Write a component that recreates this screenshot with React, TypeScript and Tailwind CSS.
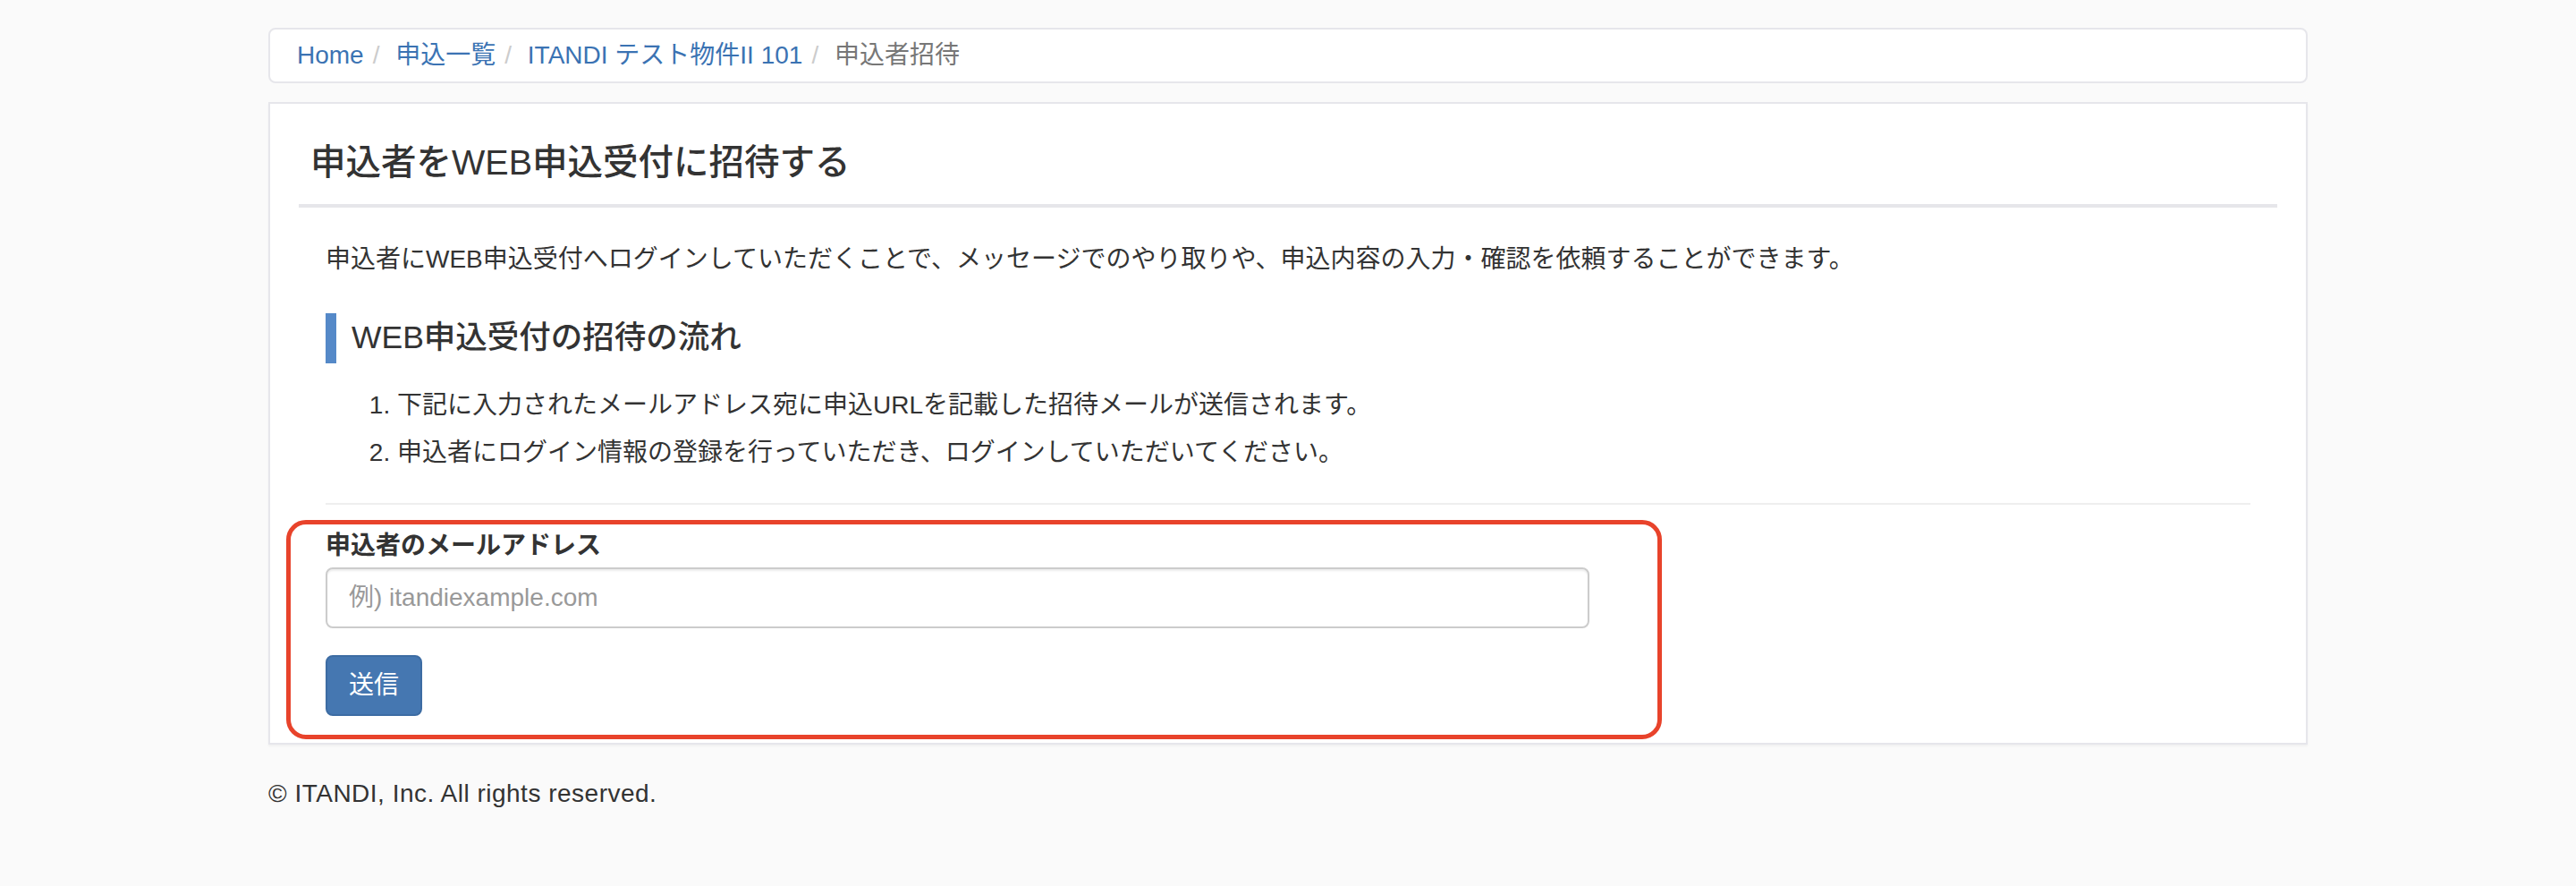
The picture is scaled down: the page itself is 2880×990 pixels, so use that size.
import React, { useState } from "react";

const crumbs = [
  { label: "Home", href: "#" },
  { label: "申込一覧", href: "#" },
  { label: "ITANDI テスト物件II 101", href: "#" },
];

const steps = [
  "下記に入力されたメールアドレス宛に申込URLを記載した招待メールが送信されます。",
  "申込者にログイン情報の登録を行っていただき、ログインしていただいてください。",
];

const App: React.FC = () => {
  const [email, setEmail] = useState("");

  return (
    <div className="min-h-screen bg-[#fafafa] text-[#333] font-['Liberation_Sans','Noto_Sans_CJK_JP',sans-serif]">
      <div className="w-[2280px] mx-auto pt-[31px]">
        {/* breadcrumb */}
        <ol className="flex items-center h-[62px] px-[30px] bg-white border-2 border-[#e6e6eb] rounded-[8px] text-[28px] leading-[40px]">
          {crumbs.map((c) => (
            <li key={c.label} className="flex items-center">
              <a href={c.href} className="text-[#3b73b3]">
                {c.label}
              </a>
              <span className="px-[10px] text-[#ccc]">/&nbsp;</span>
            </li>
          ))}
          <li className="text-[#777]">申込者招待</li>
        </ol>

        {/* panel */}
        <div className="mt-[21px] bg-white border-2 border-[#e6e6eb] px-[32px] pb-[30px] shadow-[0_2px_2px_rgba(0,0,0,0.04)]">
          <div className="pt-[37px] pb-[19px] pl-[13px] border-b-4 border-[#e6e6ea]">
            <h3 className="text-[39.5px] leading-[56px] font-medium">
              申込者をWEB申込受付に招待する
            </h3>
          </div>

          <div className="px-[30px]">
            <p className="mt-[38px] text-[28px] leading-[40px]">
              申込者にWEB申込受付へログインしていただくことで、メッセージでのやり取りや、申込内容の入力・確認を依頼することができます。
            </p>

            <h4 className="mt-[40px] h-[56px] flex items-center border-l-[12px] border-[#5589c8] pl-[17px] text-[35.5px] font-medium">
              WEB申込受付の招待の流れ
            </h4>

            <ol className="mt-[20px] pl-[80px] list-decimal text-[28px] leading-[53px]">
              {steps.map((s) => (
                <li key={s}>{s}</li>
              ))}
            </ol>

            <hr className="mt-[30px] border-0 border-t-2 border-[#eee]" />

            <form
              className="relative mt-[26px]"
              onSubmit={(e) => e.preventDefault()}
            >
              <label
                htmlFor="email"
                className="block mb-[4px] text-[28px] leading-[40px] font-bold"
              >
                申込者のメールアドレス
              </label>
              <input
                id="email"
                type="email"
                value={email}
                onChange={(e) => setEmail(e.target.value)}
                placeholder="例) itandiexample.com"
                className="block w-[1413px] h-[68px] px-[24px] border-2 border-[#ccc] rounded-[8px] text-[28px] text-[#555] placeholder:text-[#999] shadow-[inset_0_2px_2px_rgba(0,0,0,0.075)] outline-none"
              />
              <button
                type="submit"
                className="mt-[30px] h-[68px] px-[24px] bg-[#4577b1] border-2 border-[#3d6ca3] rounded-[8px] text-white text-[28px]"
              >
                送信
              </button>

              {/* highlight annotation */}
              <div className="pointer-events-none absolute -left-[44px] -top-[9px] w-[1538px] h-[245px] border-[5px] border-[#e8432b] rounded-[22px]" />
            </form>
          </div>
        </div>

        <footer className="mt-[35px] text-[28px] leading-[40px] tracking-[0.5px]">
          © ITANDI, Inc. All rights reserved.
        </footer>
      </div>
    </div>
  );
};

export default App;
